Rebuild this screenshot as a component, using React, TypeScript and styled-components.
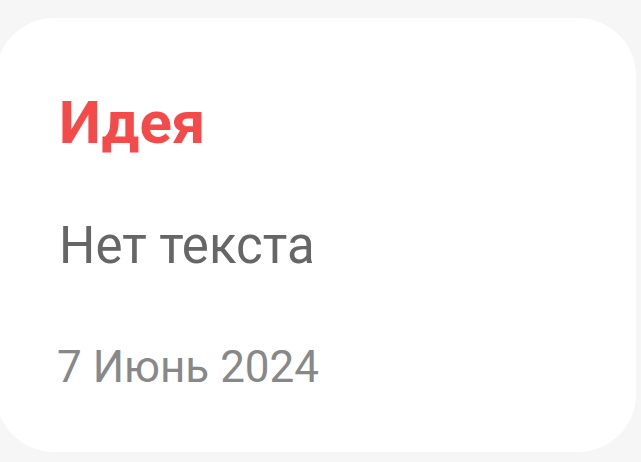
import React from "react";
import styled, { createGlobalStyle } from "styled-components";

const GlobalStyle = createGlobalStyle`
  html, body {
    margin: 0;
    padding: 0;
    background-color: #f6f6f6;
    font-family: Roboto, "Noto Sans", "Liberation Sans", sans-serif;
  }
`;

const Page = styled.div`
  width: 641px;
  height: 462px;
  overflow: hidden;
  padding-top: 18px;
  box-sizing: border-box;
`;

const Card = styled.section`
  width: 640px;
  height: 434px;
  margin-left: -4px;
  box-sizing: border-box;
  background-color: #fff;
  border-radius: 58px;
  padding: 70px 0 0 63px;
  display: flex;
  flex-direction: column;
`;

const Title = styled.h2`
  margin: 0;
  color: #f44a4a;
  font-size: 60px;
  font-weight: 700;
  line-height: 70px;
`;

const Body = styled.p`
  margin: 58px 0 0;
  color: #666;
  font-size: 51px;
  line-height: 60px;
`;

const DateText = styled.div<{ $gap: number }>`
  margin-top: ${(p) => p.$gap}px;
  margin-left: -2px;
  color: #888;
  font-size: 44px;
  line-height: 50px;
`;

const App = () => {
  return (
    <>
      <GlobalStyle />
      <Page>
        <Card>
          <Title>Идея</Title>
          <Body>Нет текста</Body>
          <DateText $gap={66}>7 Июнь 2024</DateText>
        </Card>
      </Page>
    </>
  );
};

export default App;
